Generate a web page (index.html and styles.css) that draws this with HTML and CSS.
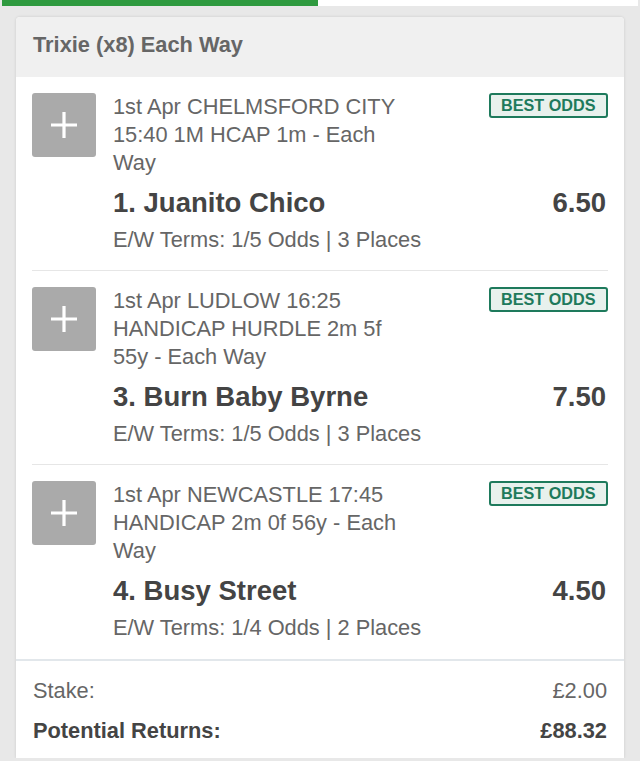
FILE: index.html
```html
<!DOCTYPE html>
<html lang="en">
<head>
<meta charset="utf-8">
<title>Trixie (x8) Each Way</title>
<link rel="stylesheet" href="styles.css">
</head>
<body>
<div class="progress"><div class="progress-fill" style="width:49.7%"></div></div>
<div class="card">
  <div class="card-header">Trixie (x8) Each Way</div>

  <div class="leg">
    <div class="plus"><svg width="64" height="64" viewBox="0 0 64 64"><path d="M32 19v26M19 32h26" stroke="#fff" stroke-width="3.2" fill="none"/></svg></div>
    <div class="leg-body">
      <div class="leg-top">
        <div class="meta">1st Apr CHELMSFORD CITY 15:40 1M HCAP 1m - Each Way</div>
        <div class="badge">BEST ODDS</div>
      </div>
      <div class="runner"><span class="name">1. Juanito Chico</span><span class="odds">6.50</span></div>
      <div class="terms">E/W Terms: 1/5 Odds | 3 Places</div>
    </div>
  </div>

  <div class="leg">
    <div class="plus"><svg width="64" height="64" viewBox="0 0 64 64"><path d="M32 19v26M19 32h26" stroke="#fff" stroke-width="3.2" fill="none"/></svg></div>
    <div class="leg-body">
      <div class="leg-top">
        <div class="meta">1st Apr LUDLOW 16:25 HANDICAP HURDLE 2m 5f 55y - Each Way</div>
        <div class="badge">BEST ODDS</div>
      </div>
      <div class="runner"><span class="name">3. Burn Baby Byrne</span><span class="odds">7.50</span></div>
      <div class="terms">E/W Terms: 1/5 Odds | 3 Places</div>
    </div>
  </div>

  <div class="leg leg-last">
    <div class="plus"><svg width="64" height="64" viewBox="0 0 64 64"><path d="M32 19v26M19 32h26" stroke="#fff" stroke-width="3.2" fill="none"/></svg></div>
    <div class="leg-body">
      <div class="leg-top">
        <div class="meta">1st Apr NEWCASTLE 17:45 HANDICAP 2m 0f 56y - Each Way</div>
        <div class="badge">BEST ODDS</div>
      </div>
      <div class="runner"><span class="name">4. Busy Street</span><span class="odds">4.50</span></div>
      <div class="terms">E/W Terms: 1/4 Odds | 2 Places</div>
    </div>
  </div>

  <div class="summary">
    <div class="summary-row"><span>Stake:</span><span>£2.00</span></div>
    <div class="summary-row summary-total"><span>Potential Returns:</span><span>£88.32</span></div>
  </div>
</div>
</body>
</html>
```

FILE: styles.css
```css
html, body {
  margin: 0;
  padding: 0;
}
body {
  background: #e8e8e8;
  font-family: "Liberation Sans", Arial, Helvetica, sans-serif;
  color: #666;
  font-size: 21.8px;
}
.progress {
  height: 6px;
  margin: 0 2px;
  background: #fff;
}
.progress-fill {
  height: 100%;
  background: #2f9a3f;
}
.card {
  margin: 11px 16px 0;
  background: #fff;
  border-radius: 4px 4px 0 0;
  box-shadow: 0 0 3px rgba(0,0,0,0.14), 0 2px 0 #a9a9a9;
  overflow: hidden;
}
.card-header {
  background: #f0f0f0;
  font-weight: bold;
  line-height: 28px;
  padding: 14px 17px 18px;
  color: #666;
}
.leg {
  display: flex;
  margin: 0 16px;
  padding: 16px 0 16px;
  border-bottom: 1px solid #e6e6e6;
}
.leg-last {
  border-bottom: none;
  padding-bottom: 17px;
}
.plus {
  width: 64px;
  height: 64px;
  flex: none;
  background: #aaaaaa;
  border-radius: 3px;
}
.plus svg {
  display: block;
}
.leg-body {
  flex: 1;
  margin-left: 17px;
  min-width: 0;
}
.leg-top {
  display: flex;
  align-items: flex-start;
}
.meta {
  flex: 1;
  line-height: 28px;
  color: #666;
  margin-right: 74px;
}
.badge {
  flex: none;
  border: 2px solid #1e7a5c;
  background: #e8f1ed;
  color: #1e7a5c;
  border-radius: 3px;
  font-size: 16.2px;
  font-weight: bold;
  line-height: 21px;
  padding: 0 10.5px;
}
.runner {
  display: flex;
  justify-content: space-between;
  align-items: baseline;
  margin-top: 9px;
  font-size: 27.5px;
  line-height: 34px;
  font-weight: bold;
  color: #444;
}
.odds {
  margin-right: 2px;
}
.terms {
  margin-top: 6px;
  line-height: 28px;
  color: #666;
}
.summary {
  border-top: 2px solid #e2e7eb;
  padding: 16px 17px 13px;
}
.summary-row {
  display: flex;
  justify-content: space-between;
  line-height: 28px;
  color: #666;
}
.summary-total {
  margin-top: 12px;
  font-weight: bold;
  color: #444;
}
```
